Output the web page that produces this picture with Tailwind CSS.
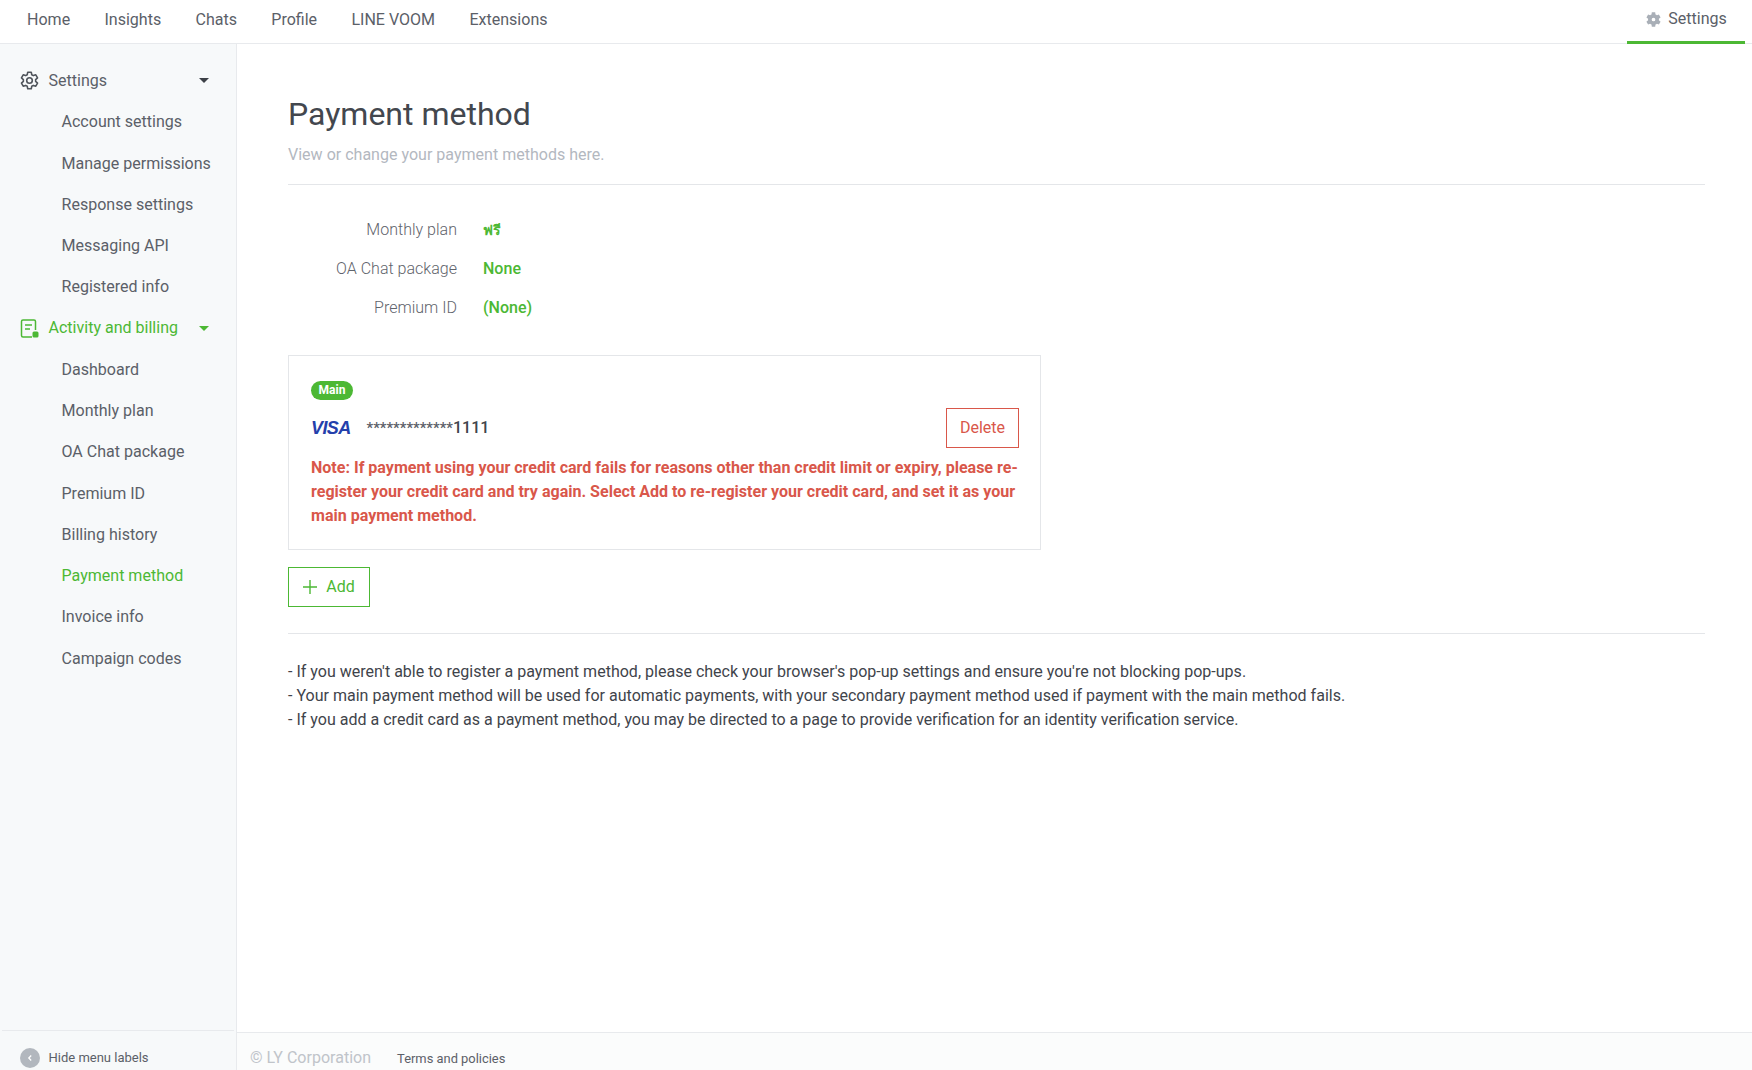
<!DOCTYPE html>
<html lang="en">
  <head>
    <meta charset="UTF-8" />
    <title>Payment method</title>
    <script src="https://cdn.jsdelivr.net/npm/@tailwindcss/browser@4"></script>
  </head>
  <body class="bg-white font-['Roboto',sans-serif] text-[16.05px] text-[#5b6068] h-[1070px] w-[1752px] overflow-hidden flex flex-col">
    <!-- Top nav -->
    <header class="h-[44px] shrink-0 flex justify-between border-b border-[#e8eaed] bg-white">
      <nav class="flex items-center gap-[34.3px] pl-[27px] h-[41px]">
        <a>Home</a><a>Insights</a><a>Chats</a><a>Profile</a><a>LINE VOOM</a><a>Extensions</a>
      </nav>
      <div class="w-[118px] h-[44px] mr-[7px] flex items-center justify-center gap-[6px] border-b-[3px] border-[#4cb834] pb-[2px]">
        <svg class="w-[17px] h-[17px]" viewBox="0 0 24 24" fill="#a9afb7"><path fill-rule="evenodd" d="M19.6 13.2a7.6 7.6 0 0 0 0-2.4l2.4-1.8-2.4-4.1-2.8 1.1a7.6 7.6 0 0 0-2-1.2L14.4 1.8H9.6l-.4 3a7.6 7.6 0 0 0-2 1.2L4.4 4.9 2 9l2.4 1.8a7.6 7.6 0 0 0 0 2.4L2 15l2.4 4.1 2.8-1.1a7.6 7.6 0 0 0 2 1.2l.4 3h4.8l.4-3a7.6 7.6 0 0 0 2-1.2l2.8 1.1L22 15zM12 14.6a2.6 2.6 0 1 1 0-5.2 2.6 2.6 0 0 1 0 5.2z"/></svg>
        <span>Settings</span>
      </div>
    </header>

    <div class="flex flex-1 min-h-0">
      <!-- Sidebar -->
      <aside class="w-[237px] shrink-0 bg-[#f7f9fa] border-r border-[#e8eaed] flex flex-col">
        <div class="flex-1 pt-[16px]">
          <div class="h-[41.25px] flex items-center pl-[19px] pr-[27px]">
            <svg class="w-[21px] h-[21px] mr-[8.5px]" viewBox="0 0 24 24" fill="none" stroke="#4f545b" stroke-width="1.8" stroke-linejoin="round"><path d="M10 2.5h4l.6 2.9 1.8 1 2.8-.9 2 3.5-2.2 2v2l2.2 2-2 3.5-2.8-.9-1.8 1-.6 2.9h-4l-.6-2.9-1.8-1-2.8.9-2-3.5 2.2-2v-2l-2.2-2 2-3.5 2.8.9 1.8-1z"/><circle cx="12" cy="12" r="3.2"/></svg>
            <span class="flex-1">Settings</span>
            <span class="w-0 h-0 border-x-[5px] border-x-transparent border-t-[5px] border-t-[#3c4047]"></span>
          </div>
          <ul class="pl-[61.5px]">
            <li class="h-[41.25px] leading-[41px]">Account settings</li>
            <li class="h-[41.25px] leading-[41px]">Manage permissions</li>
            <li class="h-[41.25px] leading-[41px]">Response settings</li>
            <li class="h-[41.25px] leading-[41px]">Messaging API</li>
            <li class="h-[41.25px] leading-[41px]">Registered info</li>
          </ul>
          <div class="h-[41.25px] flex items-center pl-[19px] pr-[27px] text-[#4cb834]">
            <svg class="w-[21px] h-[21px] mr-[8.5px]" viewBox="0 0 21 21" fill="none" stroke="#4cb834" stroke-width="1.5"><path d="M13 19H4a1.5 1.5 0 0 1-1.5-1.5v-14A1.5 1.5 0 0 1 4 2h11a1.5 1.5 0 0 1 1.5 1.5V12"/><path d="M6 7h7M6 11h5"/><rect x="13.5" y="13.5" width="6" height="6" rx="1.5" fill="#4cb834" stroke="none"/></svg>
            <span class="flex-1">Activity and billing</span>
            <span class="w-0 h-0 border-x-[5px] border-x-transparent border-t-[5px] border-t-[#4cb834]"></span>
          </div>
          <ul class="pl-[61.5px]">
            <li class="h-[41.25px] leading-[41px]">Dashboard</li>
            <li class="h-[41.25px] leading-[41px]">Monthly plan</li>
            <li class="h-[41.25px] leading-[41px]">OA Chat package</li>
            <li class="h-[41.25px] leading-[41px]">Premium ID</li>
            <li class="h-[41.25px] leading-[41px]">Billing history</li>
            <li class="h-[41.25px] leading-[41px] text-[#4cb834]">Payment method</li>
            <li class="h-[41.25px] leading-[41px]">Invoice info</li>
            <li class="h-[41.25px] leading-[41px]">Campaign codes</li>
          </ul>
        </div>
        <div class="h-[40px] mx-[2px] border-t border-[#e8eaed] flex items-center pl-[17.5px] pt-[15px] gap-[9px] text-[13px]">
          <span class="w-[20px] h-[20px] rounded-full bg-[#b2b7be] flex items-center justify-center">
            <svg class="w-[8px] h-[8px]" viewBox="0 0 8 8" fill="none" stroke="#fff" stroke-width="1.3"><path d="M5.2 1.5 2.8 4l2.4 2.5"/></svg>
          </span>
          <span>Hide menu labels</span>
        </div>
      </aside>

      <div class="flex-1 flex flex-col min-w-0">
        <main class="flex-1 pl-[51px] pr-[47px] pt-[48px]">
          <h1 class="text-[32px] leading-[44px] text-[#43474e] font-normal">Payment method</h1>
          <p class="mt-[7px] leading-[24px] text-[#b3b8bf]">View or change your payment methods here.</p>
          <hr class="mt-[17px] border-[#e4e6e9]" />

          <dl class="mt-[33px] grid grid-cols-[169px_1fr] gap-x-[26px] gap-y-[15px] leading-[24px]">
            <dt class="text-right text-[#5f646c] font-light">Monthly plan</dt>
            <dd class="text-[#4cb834] font-['Noto_Sans','DejaVu_Sans',sans-serif] font-bold text-[14px]">ฟรี</dd>
            <dt class="text-right text-[#5f646c] font-light">OA Chat package</dt>
            <dd class="text-[#4cb834] font-medium">None</dd>
            <dt class="text-right text-[#5f646c] font-light">Premium ID</dt>
            <dd class="text-[#4cb834] font-medium">(None)</dd>
          </dl>

          <section class="mt-[35px] w-[753px] h-[195px] border border-[#e4e6e9] pl-[22px] pr-[21px] pt-[25px]">
            <span class="block w-[42px] h-[19px] rounded-full bg-[#4cb834] text-white text-[12px] font-bold leading-[19px] text-center">Main</span>
            <div class="flex items-center mt-[8px] h-[40px]">
              <span class="w-[55.5px] shrink-0 font-['Liberation_Sans',sans-serif] font-bold italic text-[18px] tracking-[-0.6px] text-[#2440ab]">VISA</span>
              <span class="flex-1 text-[#3f444b] font-medium"><span class="text-[15px] text-[#5b6068]">*************</span>1111</span>
              <button class="w-[73px] h-[40px] border border-[#d9574a] text-[#d9574a]">Delete</button>
            </div>
            <p class="mt-[8px] text-[#d9574a] font-bold leading-[24px] w-[712px]">Note: If payment using your credit card fails for reasons other than credit limit or expiry, please re-register your credit card and try again. Select Add to re-register your credit card, and set it as your main payment method.</p>
          </section>

          <button class="mt-[17px] w-[82px] h-[40px] border border-[#4cb834] text-[#4cb834] flex items-center justify-center gap-[9px]">
            <svg class="w-[14px] h-[14px]" viewBox="0 0 14 14" fill="none" stroke="#4cb834" stroke-width="1.4"><path d="M7 0v14M0 7h14"/></svg>
            Add
          </button>
          <hr class="mt-[26px] border-[#e4e6e9]" />

          <div class="mt-[26px] leading-[24px] text-[#3f444b]">
            <p>- If you weren't able to register a payment method, please check your browser's pop-up settings and ensure you're not blocking pop-ups.</p>
            <p>- Your main payment method will be used for automatic payments, with your secondary payment method used if payment with the main method fails.</p>
            <p>- If you add a credit card as a payment method, you may be directed to a page to provide verification for an identity verification service.</p>
          </div>
        </main>
        <footer class="h-[38px] shrink-0 border-t border-[#e8eaed] bg-[#fbfcfc] flex items-center pl-[13px] pt-[13px] gap-[26px]">
          <span class="text-[#c0c4ca]">© LY Corporation</span>
          <span class="text-[12.9px] pt-[1px]">Terms and policies</span>
        </footer>
      </div>
    </div>
  </body>
</html>
